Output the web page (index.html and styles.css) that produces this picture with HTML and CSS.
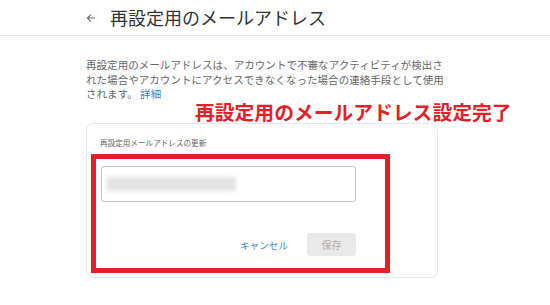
FILE: index.html
```html
<!DOCTYPE html>
<html lang="ja">
<head>
<meta charset="utf-8">
<link rel="stylesheet" href="styles.css">
</head>
<body>
<header class="topbar">
  <svg class="back" width="10" height="10" viewBox="0 0 10 10"><path d="M9 5H1.5M4.8 1.6L1.4 5l3.4 3.4" fill="none" stroke="#666" stroke-width="1.1"/></svg>
  <h1 class="title">再設定用のメールアドレス</h1>
</header>
<main class="main">
  <p class="desc">再設定用のメールアドレスは、アカウントで不審なアクティビティが検出さ<br>れた場合やアカウントにアクセスできなくなった場合の連絡手段として使用<br>されます。 <a class="link" href="#">詳細</a></p>
  <div class="note">再設定用のメールアドレス設定完了</div>
  <section class="card">
    <div class="label">再設定用メールアドレスの更新</div>
    <div class="input"><div class="blurred"></div></div>
    <div class="actions">
      <span class="cancel">キャンセル</span>
      <span class="save">保存</span>
    </div>
    <div class="highlight"></div>
  </section>
</main>
</body>
</html>
```
FILE: styles.css
```css
html, body {
  margin: 0;
  padding: 0;
  background: #ffffff;
  font-family: "Noto Sans CJK JP", "Noto Sans", sans-serif;
}
.topbar {
  height: 35px;
  border-bottom: 1px solid #e8e8e8;
  display: flex;
  align-items: center;
  padding-left: 86px;
  box-sizing: content-box;
}
.back {
  display: block;
  margin-right: 14px;
}
.title {
  margin: 0;
  font-size: 18px;
  font-weight: 400;
  line-height: 24px;
  color: #333333;
  margin-top: -1px;
}
.main {
  padding-left: 86px;
}
.desc {
  margin: 22px 0 0 0;
  font-size: 10.5px;
  line-height: 14.5px;
  color: #666666;
  letter-spacing: 0.05px;
}
.link {
  color: #3f7fc6;
  text-decoration: none;
}
.note {
  margin-left: 109px;
  font-size: 19.8px;
  line-height: 20px;
  font-weight: 700;
  color: #e31f2b;
  white-space: nowrap;
}
.card {
  position: relative;
  margin-top: 1.5px;
  width: 352px;
  border: 1px solid #e8e8e8;
  border-radius: 7px;
  padding: 14px 0 21px 14px;
  box-sizing: border-box;
}
.label {
  font-size: 7.6px;
  line-height: 10px;
  color: #666666;
  margin-left: -1px;
}
.input {
  margin-top: 18px;
  width: 255px;
  height: 36px;
  border: 1px solid #c4c4c4;
  border-radius: 3px;
  box-sizing: border-box;
  display: flex;
  align-items: center;
  padding-left: 5px;
  overflow: hidden;
}
.blurred {
  width: 129px;
  height: 14px;
  background: #e2e2e2;
  filter: blur(2px);
}
.actions {
  width: 255px;
  margin-top: 31px;
  display: flex;
  justify-content: flex-end;
  align-items: center;
}
.cancel {
  font-size: 9.6px;
  color: #4a86c8;
  margin-right: 19px;
  line-height: 14px;
}
.save {
  width: 49px;
  height: 23px;
  border-radius: 3px;
  background: #e9e9e9;
  color: #aeaeae;
  font-size: 10px;
  display: flex;
  align-items: center;
  justify-content: center;
}
.highlight {
  position: absolute;
  left: 4px;
  top: 30px;
  width: 299px;
  height: 119px;
  border: 5px solid #e31f2b;
  box-sizing: border-box;
  pointer-events: none;
}
```
